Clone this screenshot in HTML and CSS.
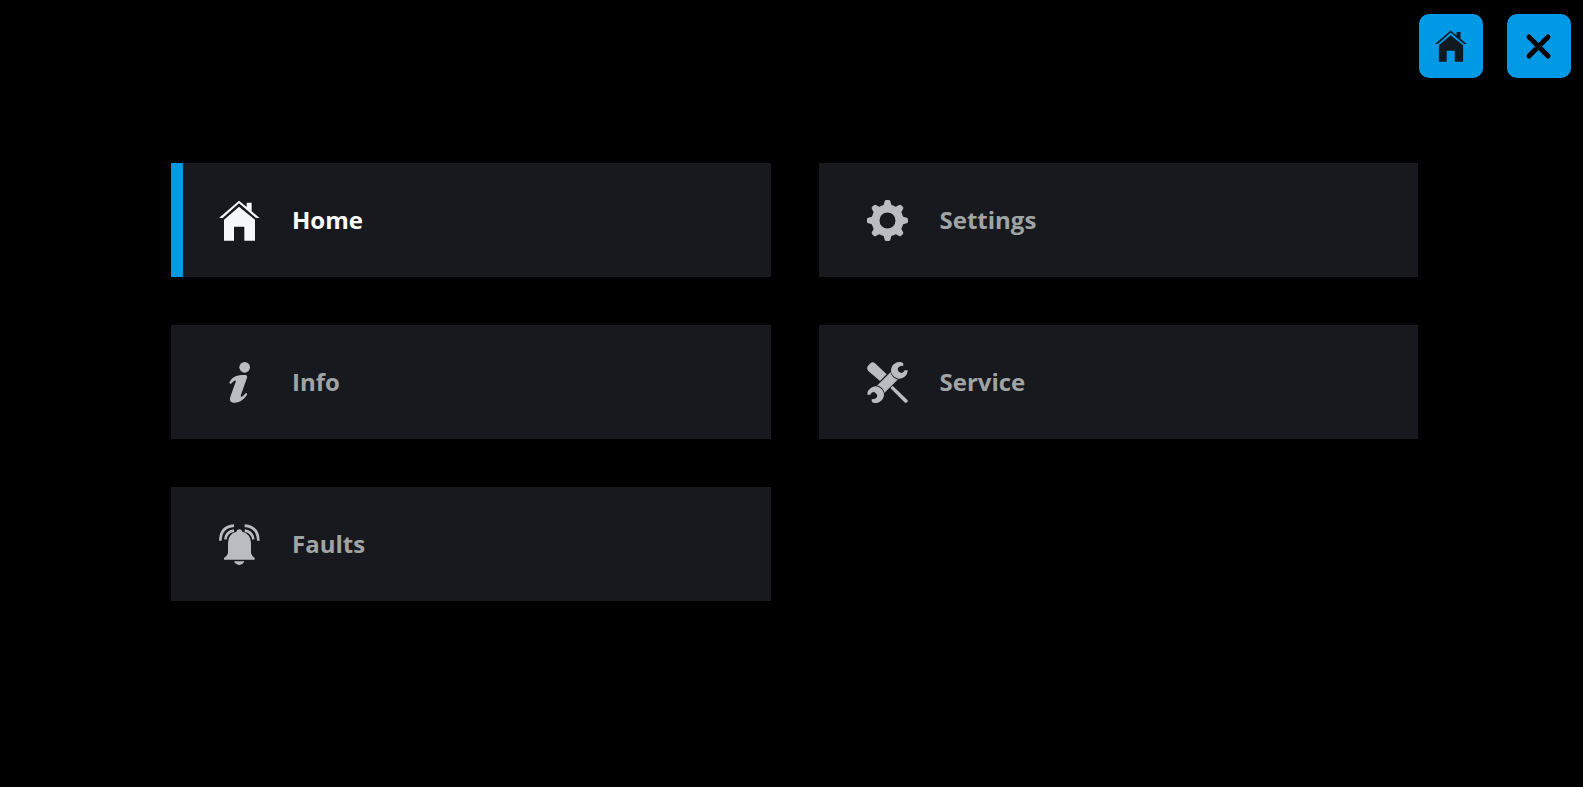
FILE: index.html
```
<!DOCTYPE html>
<html lang="en">
<head>
    <meta charset="UTF-8">
    <meta name="viewport" content="width=device-width, initial-scale=1.0">
    <title>Menu</title>
    <link rel="stylesheet" href="styles.css">
</head>
<body>
    <!-- Shared house icon -->
    <svg class="symbols" aria-hidden="true">
        <symbol id="icon-home" viewBox="0 0 123 123">
            <path d="M0 54 L60 2 L83 21 V8 H98 V34 L122 54 H111 L60 10 L11 54 Z"/>
            <path d="M15 59 L60 20 L108 59 V122 H76 V80 H45 V122 H15 Z"/>
        </symbol>
    </svg>

    <header class="toolbar">
        <button class="tool-button" type="button" aria-label="Home">
            <svg class="tool-icon"><use href="#icon-home"/></svg>
        </button>
        <button class="tool-button" type="button" aria-label="Close">
            <svg class="tool-icon close-icon" viewBox="0 0 32 32">
                <path d="M6 7 L25 26 M25 7 L6 26"/>
            </svg>
        </button>
    </header>

    <nav class="menu">
        <a class="menu-item active" href="#home">
            <svg class="menu-icon"><use href="#icon-home"/></svg>
            <span>Home</span>
        </a>
        <a class="menu-item" href="#settings">
            <svg class="menu-icon" viewBox="0 0 123 123">
                <circle cx="61.5" cy="61.5" r="36" fill="none" stroke="currentColor" stroke-width="24"/>
                <g id="teeth">
                    <path id="tooth" d="M47 20 Q50 17 53 4 Q54 0 58 0 H65 Q69 0 70 4 Q73 17 76 20 L74 28 H49 Z"/>
                    <use href="#tooth" transform="rotate(45 61.5 61.5)"/>
                    <use href="#tooth" transform="rotate(90 61.5 61.5)"/>
                    <use href="#tooth" transform="rotate(135 61.5 61.5)"/>
                </g>
                <use href="#teeth" transform="rotate(180 61.5 61.5)"/>
            </svg>
            <span>Settings</span>
        </a>
        <a class="menu-item" href="#info">
            <svg class="menu-icon" viewBox="0 0 123 123">
                <circle cx="77" cy="16" r="16"/>
                <path d="M31 63 C36 48 50 40 68 39 L80 39 C86 41 85 45 83 50 L66 98 C63 107 69 106 81 93 L85 96 C79 110 63 122 47 122 C33 122 31 114 34 104 L50 60 C52 52 46 54 35 66 Z"/>
            </svg>
            <span>Info</span>
        </a>
        <a class="menu-item" href="#service">
            <svg class="menu-icon" viewBox="0 0 123 123">
                <!-- screwdriver -->
                <path d="M3 11 L11 3 Q18 -2 24 4 L59 37 L39 57 L3 26 Q-2 18 3 11 Z"/>
                <path d="M77 71 L122 115 V119 L118 122 H114 L70 78 Z"/>
                <!-- wrench -->
                <path d="M72 29 L94 51 L51 94 L29 72 Z"/>
                <circle class="gap" cx="98" cy="25" r="28"/>
                <circle class="gap" cx="25" cy="98" r="28"/>
                <path id="jaw" d="M107 2 A25 25 0 1 0 122 28 V25 L113 25 Q110 32 104 33 Q93 31 92 20 Q94 14 101 12 L109 11 V5 Z"/>
                <use href="#jaw" transform="rotate(180 61.5 61.5)"/>
            </svg>
            <span>Service</span>
        </a>
        <a class="menu-item" href="#faults">
            <svg class="menu-icon" viewBox="0 0 123 123">
                <path d="M52 23 Q54 16 61 16 Q68 16 70 23 Q96 30 96 58 V88 Q98 95 107 102 V107 H15 V102 Q25 95 27 88 V58 Q27 30 52 23 Z"/>
                <path d="M45 112 H76 Q72 122 61 123 Q49 122 45 112 Z"/>
                <path class="wave" d="M4 50 Q5 8 45 5 M19 46 Q22 23 45 20 M118 50 Q117 8 77 5 M103 46 Q100 23 77 20"/>
            </svg>
            <span>Faults</span>
        </a>
    </nav>
</body>
</html>
```
FILE: styles.css
```
* {
    box-sizing: border-box;
}

body {
    margin: 0;
    background-color: #000;
    font-family: 'Open Sans', 'Noto Sans', sans-serif;
}

.symbols {
    display: none;
}

/* Top right buttons */
.toolbar {
    display: flex;
    justify-content: flex-end;
    gap: 24px;
    padding: 14px 12px 0;
}

.tool-button {
    display: flex;
    align-items: center;
    justify-content: center;
    width: 64px;
    height: 64px;
    padding: 0;
    border: none;
    border-radius: 10px;
    background-color: #0099e5;
    color: #101820;
    cursor: pointer;
}

.tool-icon {
    width: 32px;
    height: 32px;
    fill: currentColor;
}

.close-icon {
    fill: none;
    stroke: #000;
    stroke-width: 5;
    stroke-linecap: round;
}

/* Menu tiles */
.menu {
    display: grid;
    grid-template-columns: 1fr 1fr;
    gap: 48px;
    padding: 85px 165px 48px 171px;
}

.menu-item {
    display: flex;
    align-items: center;
    gap: 32px;
    height: 114px;
    padding-left: 48px;
    background-color: #17191e;
    color: #a0a4a5;
    font-size: 24px;
    font-weight: 700;
    line-height: 32px;
    text-decoration: none;
}

.menu-item.active {
    padding-left: 36px;
    border-left: 12px solid #0099e5;
    color: #fff;
}

.menu-icon {
    width: 41px;
    height: 41px;
    fill: #bbbcc2;
    color: #bbbcc2;
}

.active .menu-icon {
    fill: #f5f7f9;
}

.gap {
    fill: #17191e;
}

.wave {
    fill: none;
    stroke: currentColor;
    stroke-width: 8;
}
```
